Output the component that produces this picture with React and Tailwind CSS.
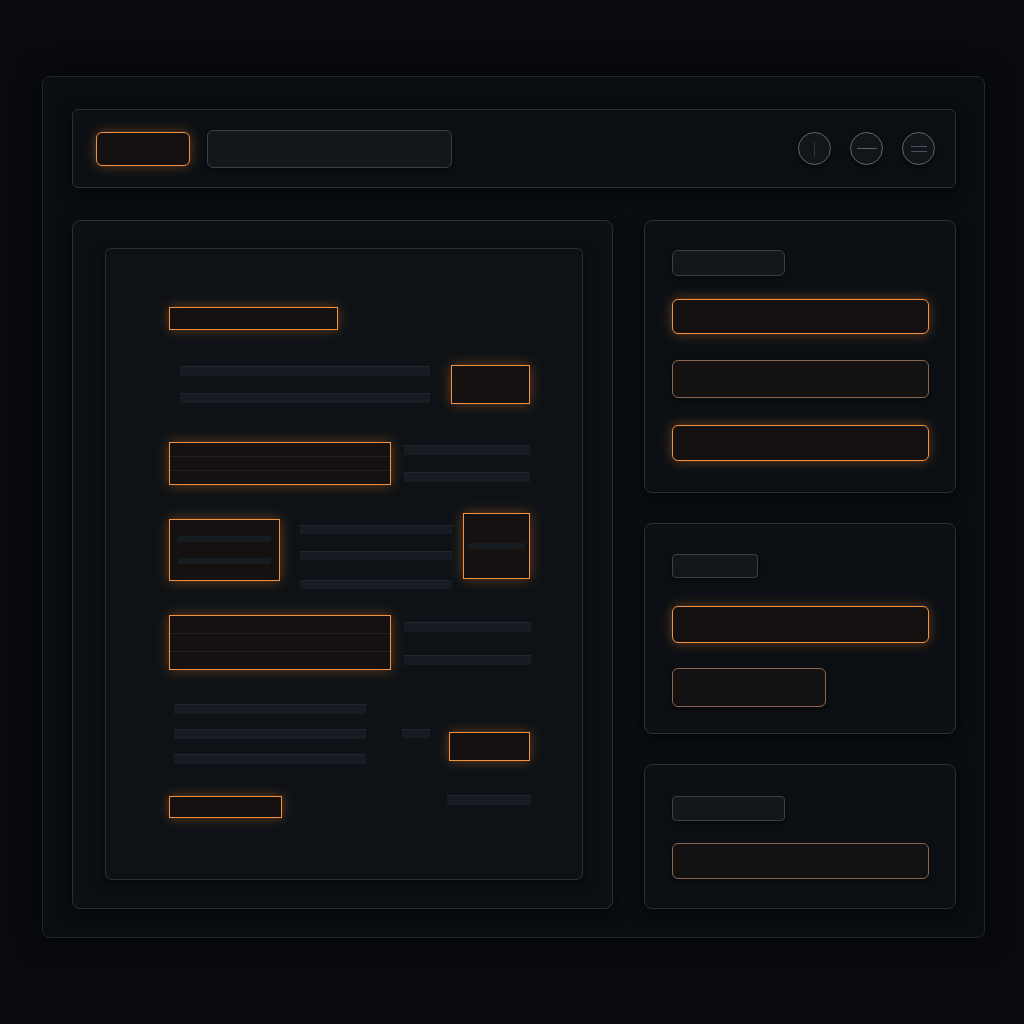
import React from "react";

// shared looks
const glow = "border border-[#f5903f] bg-[#141110] shadow-[0_0_12px_rgba(240,130,50,0.4)]";
const dim = "border border-[#8a6650] bg-[#131112] shadow-[0_2px_6px_rgba(0,0,0,0.6)]";
const grayBox = "border border-[#3a4047] bg-[#12171c] shadow-[0_2px_6px_rgba(0,0,0,0.6)]";
const line = "bg-[#161c22] border-t border-[#1f262d]";
const panel = "rounded-lg border border-[#2b3036] bg-[#0c1014] shadow-[0_4px_16px_rgba(0,0,0,0.7)]";

function Lines({ w, gaps, h = 10, className = "" }) {
  return (
    <div className={`flex flex-col ${className}`} style={{ width: w }}>
      {gaps.map((g, i) => (
        <div key={i} className={line} style={{ height: h, marginTop: g }} />
      ))}
    </div>
  );
}

function RoundBtn({ children }) {
  return (
    <div className="w-[33px] h-[33px] rounded-full border border-[#62686f] bg-[#11161b] shadow-[0_2px_6px_rgba(0,0,0,0.7)] flex items-center justify-center">
      {children}
    </div>
  );
}

export default function App() {
  return (
    <div className="min-h-screen w-full bg-[#090b0e] pl-[42px] pt-[76px]">
      <div className="w-[943px] h-[862px] rounded-lg border border-[#22272c] bg-[#0a0d11] pl-[29px] pt-[32px] shadow-[0_0_30px_rgba(0,0,0,0.8)]">
        {/* top bar */}
        <div className={`w-[884px] h-[79px] ${panel} rounded-md flex items-center pl-[23px] pr-[20px]`}>
          <div className={`w-[94px] h-[34px] rounded-md ${glow}`} />
          <div className={`ml-[17px] w-[245px] h-[38px] rounded-md ${grayBox}`} />
          <div className="ml-auto flex gap-[19px]">
            <RoundBtn><div className="w-px h-[14px] bg-[#2e353c]" /></RoundBtn>
            <RoundBtn><div className="w-[20px] h-px bg-[#5b6168]" /></RoundBtn>
            <RoundBtn>
              <div className="flex flex-col gap-[4px]">
                <div className="w-[16px] h-px bg-[#4a5057]" />
                <div className="w-[16px] h-px bg-[#4a5057]" />
              </div>
            </RoundBtn>
          </div>
        </div>

        <div className="mt-[32px] flex">
          {/* main panel */}
          <div className={`w-[541px] h-[689px] ${panel} pl-[32px] pt-[27px]`}>
            <div className="w-[478px] h-[632px] rounded-md border border-[#2a2f35] bg-[#0e1216] pl-[63px] pt-[58px] shadow-[0_4px_14px_rgba(0,0,0,0.6)]">
              {/* row 1 */}
              <div className={`w-[169px] h-[23px] ${glow}`} />

              {/* row 2 */}
              <div className="mt-[35px] flex h-[39px]">
                <Lines w={250} gaps={[1, 17]} className="ml-[11px]" />
                <div className={`ml-[21px] w-[79px] h-[39px] ${glow}`} />
              </div>

              {/* row 3 */}
              <div className="mt-[38px] flex h-[43px]">
                <div className={`w-[222px] h-[43px] ${glow} flex flex-col justify-evenly`}>
                  <div className="h-px bg-[#1d2228]" />
                  <div className="h-px bg-[#1d2228]" />
                </div>
                <Lines w={126} gaps={[3, 17]} className="ml-[13px]" />
              </div>

              {/* row 4 */}
              <div className="mt-[28px] flex h-[77px]">
                <div className={`mt-[6px] w-[111px] h-[62px] ${glow} flex flex-col justify-evenly px-[8px]`}>
                  <div className="h-[6px] bg-[#171c21]" />
                  <div className="h-[6px] bg-[#171c21]" />
                </div>
                <Lines w={152} h={9} gaps={[12, 17, 20]} className="ml-[20px]" />
                <div className={`ml-[11px] w-[67px] h-[66px] ${glow} flex flex-col justify-center`}>
                  <div className="h-[6px] bg-[#171c21] mx-[4px]" />
                </div>
              </div>

              {/* row 5 */}
              <div className="mt-[25px] flex h-[55px]">
                <div className={`w-[222px] h-[55px] ${glow} flex flex-col justify-evenly`}>
                  <div className="h-px bg-[#1d2228]" />
                  <div className="h-px bg-[#1d2228]" />
                </div>
                <Lines w={127} gaps={[7, 23]} className="ml-[13px]" />
              </div>

              {/* row 6 */}
              <div className="mt-[34px] flex h-[60px]">
                <Lines w={192} gaps={[0, 15, 15]} className="ml-[5px]" />
                <div className={`ml-[36px] mt-[25px] w-[28px] h-[9px] ${line}`} />
                <div className={`ml-[19px] mt-[28px] w-[81px] h-[29px] ${glow}`} />
              </div>

              {/* row 7 */}
              <div className="mt-[31px] flex h-[23px]">
                <div className={`mt-[1px] w-[113px] h-[22px] ${glow}`} />
                <div className={`ml-[165px] w-[84px] h-[10px] ${line}`} />
              </div>
            </div>
          </div>

          {/* right column */}
          <div className="ml-[31px] w-[312px] flex flex-col">
            <div className={`h-[273px] ${panel} pl-[27px] pt-[29px]`}>
              <div className={`w-[113px] h-[26px] rounded-md ${grayBox}`} />
              <div className={`mt-[23px] w-[257px] h-[35px] rounded-md ${glow}`} />
              <div className={`mt-[26px] w-[257px] h-[38px] rounded-md ${dim}`} />
              <div className={`mt-[27px] w-[257px] h-[36px] rounded-md ${glow}`} />
            </div>

            <div className={`mt-[30px] h-[211px] ${panel} pl-[27px] pt-[30px]`}>
              <div className={`w-[86px] h-[24px] rounded ${grayBox}`} />
              <div className={`mt-[28px] w-[257px] h-[37px] rounded-md ${glow}`} />
              <div className={`mt-[25px] w-[154px] h-[39px] rounded-md ${dim}`} />
            </div>

            <div className={`mt-[30px] h-[145px] ${panel} pl-[27px] pt-[31px]`}>
              <div className={`w-[113px] h-[25px] rounded ${grayBox}`} />
              <div className={`mt-[22px] w-[257px] h-[36px] rounded-md ${dim}`} />
            </div>
          </div>
        </div>
      </div>
    </div>
  );
}
